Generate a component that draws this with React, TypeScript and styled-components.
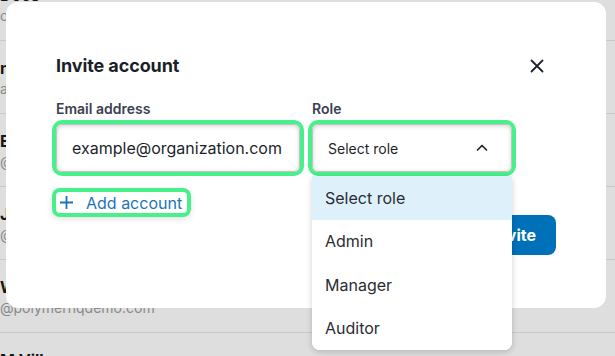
import styled, { createGlobalStyle } from "styled-components";

const GlobalStyle = createGlobalStyle`
  html, body {
    margin: 0;
    padding: 0;
    background: #dedede;
    font-family: Inter, "Noto Sans", "Liberation Sans", sans-serif;
    overflow: hidden;
  }
`;

const people = [
  { name: "Docs", email: "ocs@polymerhqdemo.com" },
  { name: "nathan", email: "ab@polymerhqdemo.com" },
  { name: "Emma", email: "@polymerhqdemo.com" },
  { name: "Julia", email: "@polymerhqdemo.com" },
  { name: "Walter", email: "@polymerhqdemo.com" },
  { name: "M Villa", email: "@polymerhqdemo.com" },
];

const roles = ["Select role", "Admin", "Manager", "Auditor"];

export default function App() {
  return (
    <Page>
      <GlobalStyle />
      <List>
        {people.map((p, i) => (
          <Row key={i}>
            <Name>{p.name}</Name>
            <Email>{p.email}</Email>
          </Row>
        ))}
      </List>

      <Modal>
        <Header>
          <Title>Invite account</Title>
          <CloseButton aria-label="Close">
            <svg width="14" height="14" viewBox="0 0 14 14" fill="none">
              <path
                d="M1.5 1.5L12.5 12.5M12.5 1.5L1.5 12.5"
                stroke="#1e2330"
                strokeWidth="1.8"
                strokeLinecap="round"
              />
            </svg>
          </CloseButton>
        </Header>

        <Fields>
          <Field>
            <Label>Email address</Label>
            <Input>example@organization.com</Input>
          </Field>
          <Field>
            <Label>Role</Label>
            <SelectBox>
              <span>Select role</span>
              <svg width="14" height="14" viewBox="0 0 14 14" fill="none">
                <path
                  d="M2.5 9L7 4.5L11.5 9"
                  stroke="#1e2330"
                  strokeWidth="1.7"
                  strokeLinecap="round"
                  strokeLinejoin="round"
                />
              </svg>
              <Menu>
                {roles.map((r, i) => (
                  <MenuItem key={r} active={i === 0}>
                    {r}
                  </MenuItem>
                ))}
              </Menu>
            </SelectBox>
          </Field>
        </Fields>

        <AddButton>
          <svg width="13" height="13" viewBox="0 0 13 13" fill="none">
            <path d="M6.5 0V13M0 6.5H13" stroke="#1b74ba" strokeWidth="1.8" />
          </svg>
          <span>Add account</span>
        </AddButton>

        <Footer>
          <InviteButton>Invite</InviteButton>
        </Footer>
      </Modal>
    </Page>
  );
}

const Page = styled.div`
  position: relative;
  width: 615px;
  height: 356px;
  overflow: hidden;
`;

const List = styled.div`
  display: flex;
  flex-direction: column;
  margin-top: -32px;
`;

const Row = styled.div`
  height: 73px;
  box-sizing: border-box;
  border-bottom: 1px solid #c9c9c9;
  padding-top: 18px;
  display: flex;
  flex-direction: column;
  gap: 2px;
`;

const Name = styled.div`
  font-size: 16px;
  font-weight: 700;
  color: #151515;
  line-height: 19px;
`;

const Email = styled.div`
  font-size: 14px;
  color: #8a8a8a;
  line-height: 18px;
`;

const Modal = styled.div`
  position: absolute;
  left: 6px;
  top: 2px;
  width: 600px;
  height: 306px;
  box-sizing: border-box;
  background: #ffffff;
  border-radius: 12px;
  padding: 46px 50px 0 50px;
  display: flex;
  flex-direction: column;
`;

const Header = styled.div`
  display: flex;
  align-items: center;
  justify-content: space-between;
  height: 36px;
`;

const Title = styled.h2`
  margin: 0;
  font-size: 18px;
  font-weight: 700;
  color: #1b1f2a;
  letter-spacing: -0.1px;
  margin-top: -2px;
`;

const CloseButton = styled.button`
  width: 38px;
  height: 36px;
  border: none;
  background: transparent;
  display: grid;
  place-items: center;
  padding: 0;
`;

const Fields = styled.div`
  display: grid;
  grid-template-columns: 244px 200px;
  gap: 12px;
  margin-top: 16px;
`;

const Field = styled.div`
  display: flex;
  flex-direction: column;
`;

const Label = styled.label`
  font-size: 14px;
  font-weight: 600;
  color: #3a4050;
  line-height: 18px;
  margin-bottom: 6px;
`;

const Input = styled.div`
  height: 48px;
  box-sizing: border-box;
  border: 1px solid #c2c2c2;
  border-radius: 6px;
  padding: 0 15px;
  display: flex;
  align-items: center;
  font-size: 16px;
  color: #1c1f2a;
  box-shadow: 0 0 0 4px #47f08a, inset 0 1px 4px rgba(0, 0, 0, 0.18);
`;

const SelectBox = styled(Input)`
  position: relative;
  justify-content: space-between;
  font-size: 14px;
  padding: 0 22px 0 15px;
`;

const Menu = styled.div`
  position: absolute;
  left: -1px;
  top: calc(100% + 5px);
  width: 200px;
  background: #ffffff;
  border-radius: 0 0 8px 8px;
  box-shadow: 0 2px 6px rgba(0, 0, 0, 0.18);
  overflow: hidden;
  z-index: 2;
`;

const MenuItem = styled.div<{ active?: boolean }>`
  height: 43.5px;
  box-sizing: border-box;
  padding: 0 13px;
  display: flex;
  align-items: center;
  font-size: 16px;
  color: #2a2c33;
  background: ${(p) => (p.active ? "#def1fb" : "#ffffff")};
`;

const AddButton = styled.button`
  align-self: flex-start;
  margin-top: 20px;
  height: 21px;
  border: none;
  background: #ffffff;
  border-radius: 4px;
  padding: 0 5px 0 4px;
  display: flex;
  align-items: center;
  gap: 13px;
  white-space: nowrap;
  font-family: inherit;
  font-size: 16px;
  color: #1b74ba;
  box-shadow: 0 0 0 4px #47f08a, 0 2px 6px 4px rgba(0, 0, 0, 0.12);
`;

const Footer = styled.div`
  display: flex;
  justify-content: flex-end;
  margin-top: 2px;
`;

const InviteButton = styled.button`
  height: 40px;
  padding: 0 20px;
  border: none;
  border-radius: 8px;
  background: #0071b9;
  color: #ffffff;
  font-family: inherit;
  font-size: 16px;
  font-weight: 700;
`;
